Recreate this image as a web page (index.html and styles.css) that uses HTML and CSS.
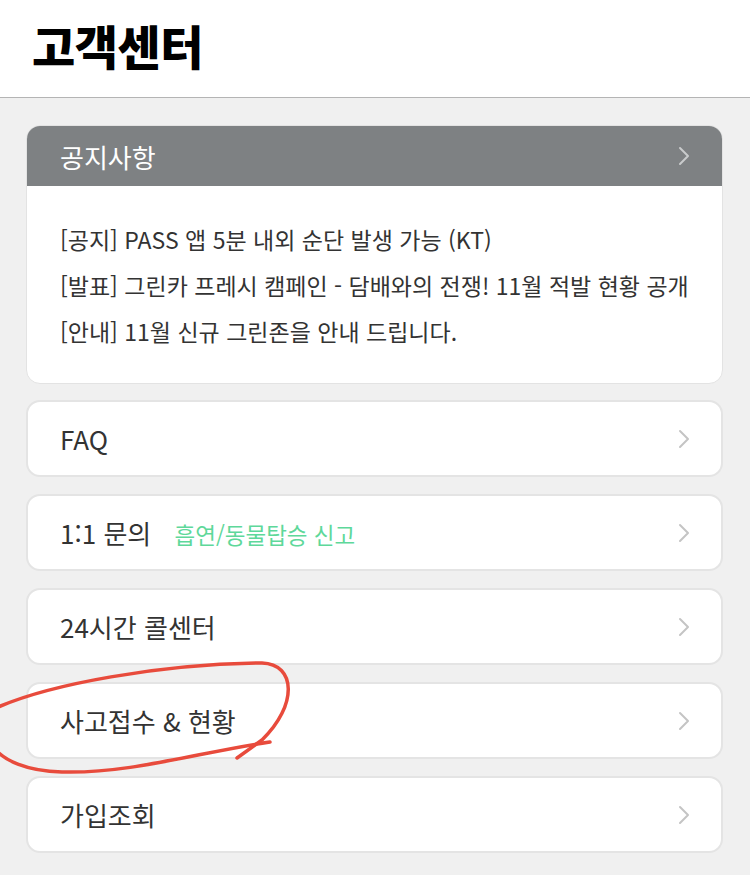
FILE: index.html
```html
<!DOCTYPE html>
<html lang="ko">
<head>
  <meta charset="UTF-8">
  <meta name="viewport" content="width=device-width, initial-scale=1.0">
  <title>고객센터</title>
  <link rel="stylesheet" href="styles.css">
</head>
<body>
  <header class="top-bar">
    <h1 class="page-title">고객센터</h1>
  </header>

  <main class="content">
    <section class="notice-card">
      <div class="notice-head">
        <span>공지사항</span>
        <svg class="chevron chevron-light" viewBox="0 0 12 20"><path d="M2 2 L10 10 L2 18"/></svg>
      </div>
      <ul class="notice-list">
        <li>[공지] PASS 앱 5분 내외 순단 발생 가능 (KT)</li>
        <li>[발표] 그린카 프레시 캠페인 - 담배와의 전쟁! 11월 적발 현황 공개</li>
        <li>[안내] 11월 신규 그린존을 안내 드립니다.</li>
      </ul>
    </section>

    <a class="menu-card" href="#">
      <span class="menu-label">FAQ</span>
      <svg class="chevron" viewBox="0 0 12 20"><path d="M2 2 L10 10 L2 18"/></svg>
    </a>
    <a class="menu-card" href="#">
      <span class="menu-label">1:1 문의 <em class="menu-sub">흡연/동물탑승 신고</em></span>
      <svg class="chevron" viewBox="0 0 12 20"><path d="M2 2 L10 10 L2 18"/></svg>
    </a>
    <a class="menu-card" href="#">
      <span class="menu-label">24시간 콜센터</span>
      <svg class="chevron" viewBox="0 0 12 20"><path d="M2 2 L10 10 L2 18"/></svg>
    </a>
    <a class="menu-card" href="#">
      <span class="menu-label">사고접수 &amp; 현황</span>
      <svg class="chevron" viewBox="0 0 12 20"><path d="M2 2 L10 10 L2 18"/></svg>
    </a>
    <a class="menu-card" href="#">
      <span class="menu-label">가입조회</span>
      <svg class="chevron" viewBox="0 0 12 20"><path d="M2 2 L10 10 L2 18"/></svg>
    </a>
  </main>

  <!-- hand-drawn circle around 사고접수 -->
  <svg class="scribble" viewBox="0 0 750 875">
    <path d="M-4 708 C 50 684, 160 664, 262 663 C 296 664, 298 705, 262 740 L 237 758"/>
    <path d="M270 742 C 200 752, 130 774, 62 772 C 25 771, 4 760, -6 748"/>
  </svg>
</body>
</html>
```

FILE: styles.css
```css
* {
  box-sizing: border-box;
}

body {
  margin: 0;
  background-color: #f0f0f0;
  font-family: "Noto Sans CJK KR", "Noto Sans", sans-serif;
  color: #333;
  position: relative;
}

.top-bar {
  height: 98px;
  background-color: #fff;
  border-bottom: 1px solid #b4b4b4;
  display: flex;
  align-items: center;
  padding: 0 0 8px 32px;
}

.page-title {
  margin: 0;
  font-size: 47px;
  font-weight: 900;
  color: #000;
  letter-spacing: -0.5px;
}

.content {
  padding: 27px 27px 20px 26px;
  display: flex;
  flex-direction: column;
  gap: 17px;
}

.notice-card {
  background-color: #fff;
  border-radius: 14px;
  border: 1px solid #e3e3e3;
  overflow: hidden;
  margin-bottom: -1px;
}

.notice-head {
  height: 60px;
  background-color: #7e8183;
  color: #fff;
  font-size: 26px;
  display: flex;
  align-items: center;
  justify-content: space-between;
  padding: 0 32px 0 33px;
}

.notice-list {
  list-style: none;
  margin: 0;
  padding: 30px 0 29px 33px;
  font-size: 23px;
  line-height: 46px;
  color: #333;
}

.menu-card {
  height: 77px;
  background-color: #fff;
  border: 2px solid #e4e4e4;
  border-radius: 14px;
  display: flex;
  align-items: center;
  justify-content: space-between;
  padding: 0 31px 0 32px;
  text-decoration: none;
  color: #333;
}

.menu-label {
  font-size: 26px;
}

.menu-sub {
  font-style: normal;
  font-size: 22.5px;
  color: #5ed89a;
  margin-left: 16px;
}

.chevron {
  width: 12px;
  height: 20px;
  fill: none;
  stroke: #c4c4c4;
  stroke-width: 2;
  stroke-linecap: round;
  stroke-linejoin: round;
}

.chevron-light {
  stroke: #c9cbcc;
}

.scribble {
  position: absolute;
  top: 0;
  left: 0;
  width: 750px;
  height: 875px;
  pointer-events: none;
  fill: none;
  stroke: #e84b3c;
  stroke-width: 3.5;
  stroke-linecap: round;
}
```
